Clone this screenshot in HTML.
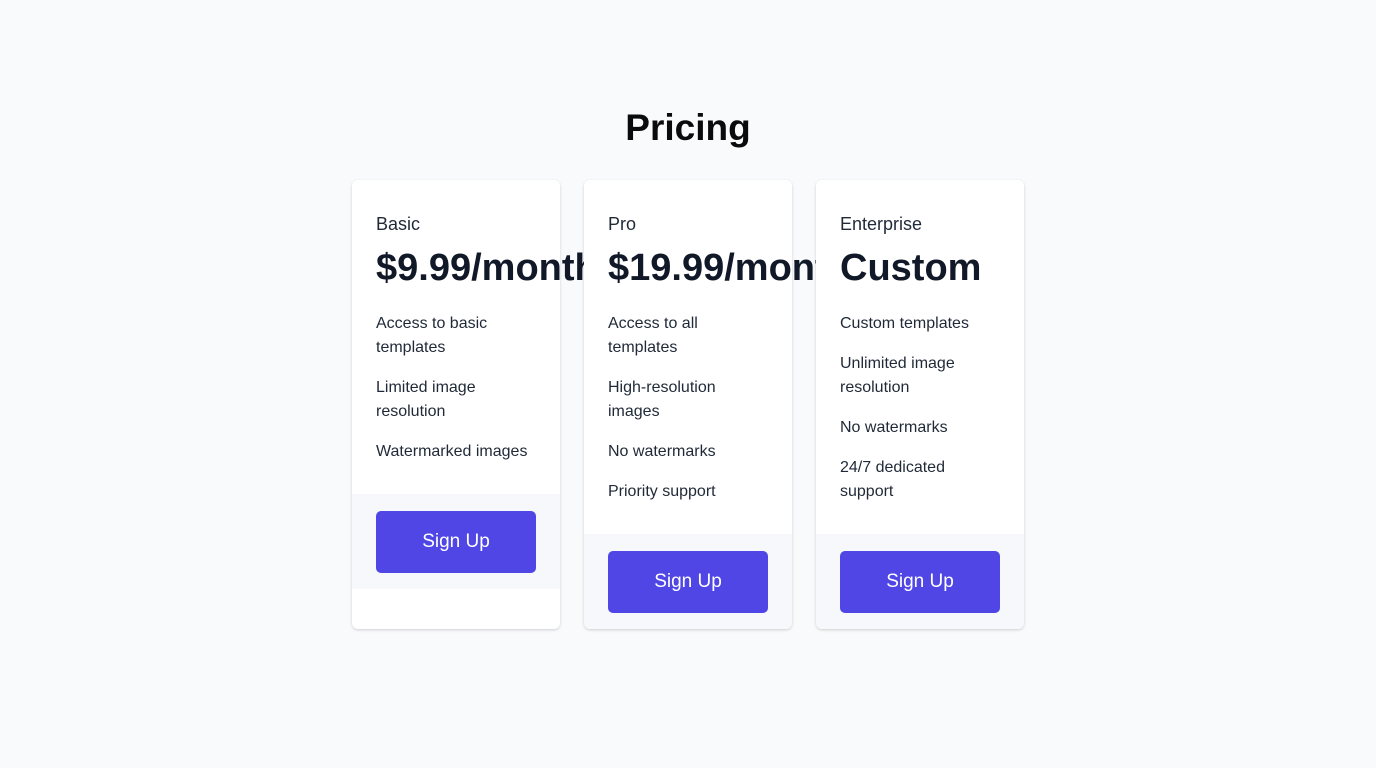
<!DOCTYPE html>
<html><head><style>
*{box-sizing:border-box;margin:0;padding:0}
body{width:1376px;height:768px;background:#f9fafb;font-family:"Liberation Sans",sans-serif;color:#111827;overflow:hidden}
h1{position:absolute;top:105px;left:0;width:1376px;text-align:center;font-size:37px;font-weight:bold;color:#0b0b0f;line-height:46px}
.wrap{position:absolute;top:180px;left:352px;display:flex;gap:24px;align-items:stretch}
.card{position:relative;width:208px;background:#fff;border-radius:6px;box-shadow:0 1px 3px rgba(0,0,0,.12),0 1px 2px rgba(0,0,0,.06)}
.body{padding:30px 24px 30px;background:#fff;border-radius:6px 6px 0 0}
.name{font-size:18px;line-height:28px;color:#1f2937}
.price{font-size:38px;line-height:40px;font-weight:bold;color:#111827;white-space:nowrap;margin-top:10px;letter-spacing:0}
ul{list-style:none;margin-top:24px}
li{font-size:16px;line-height:24px;color:#1f2937;margin-bottom:16px}
li:last-child{margin-bottom:0}
.foot{background:#f7f8fb;padding:17px 24px 16px}
.btn{width:160px;height:62px;background:#4f46e5;border-radius:5px;color:#fff;font-size:19px;display:flex;align-items:center;justify-content:center}
.card:last-child .foot,.card:nth-child(2) .foot{border-radius:0 0 6px 6px}
</style></head><body>
<h1>Pricing</h1>
<div class="wrap">
<div class="card"><div class="body"><div class="name">Basic</div><div class="price">$9.99/month</div>
<ul><li>Access to basic templates</li><li>Limited image resolution</li><li>Watermarked images</li></ul></div>
<div class="foot"><div class="btn">Sign Up</div></div></div>
<div class="card"><div class="body"><div class="name">Pro</div><div class="price">$19.99/month</div>
<ul><li>Access to all templates</li><li>High-resolution images</li><li>No watermarks</li><li>Priority support</li></ul></div>
<div class="foot"><div class="btn">Sign Up</div></div></div>
<div class="card"><div class="body"><div class="name">Enterprise</div><div class="price">Custom</div>
<ul><li>Custom templates</li><li>Unlimited image resolution</li><li>No watermarks</li><li>24/7 dedicated support</li></ul></div>
<div class="foot"><div class="btn">Sign Up</div></div></div>
</div>
</body></html>
